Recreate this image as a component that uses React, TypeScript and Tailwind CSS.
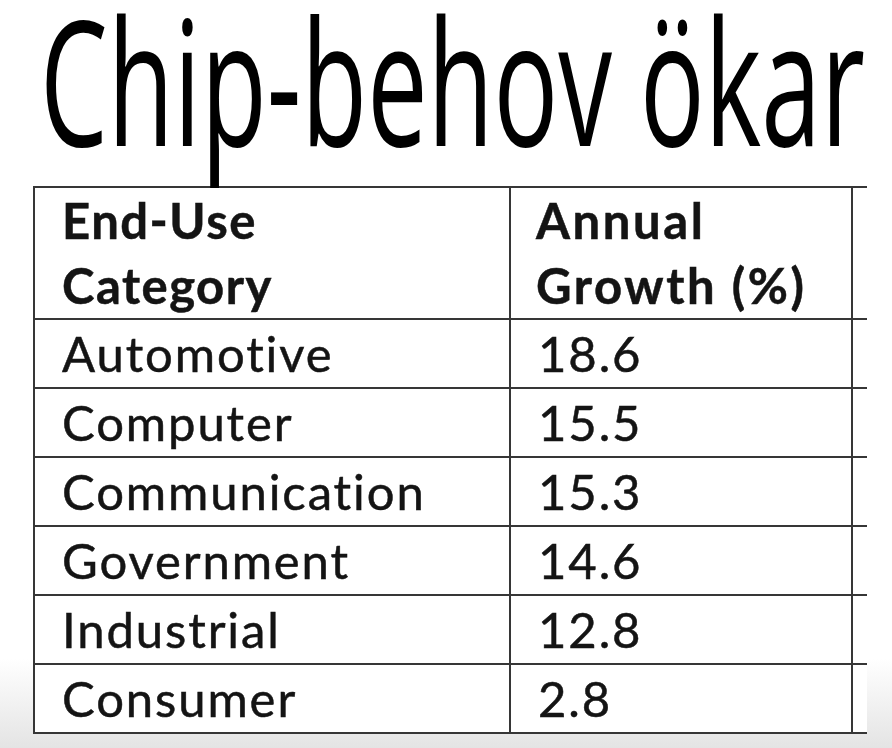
import React from "react";

const rows = [
  { cat: "Automotive", growth: "18.6" },
  { cat: "Computer", growth: "15.5" },
  { cat: "Communication", growth: "15.3" },
  { cat: "Government", growth: "14.6" },
  { cat: "Industrial", growth: "12.8" },
  { cat: "Consumer", growth: "2.8" },
];

export default function App() {
  return (
    <div className="w-[892px] h-[748px] overflow-hidden bg-[linear-gradient(to_bottom,#ffffff_88%,#e4e4e4)]">
      {/* Title */}
      <div className="h-[186px] pl-[40px] w-[892px]">
        <h1 className="inline-block whitespace-nowrap origin-top-left scale-y-[1.626] font-['Open_Sans',sans-serif] text-[107.6px] leading-[98.6px] font-normal text-black">
          Chip-behov ökar
        </h1>
      </div>

      {/* Table */}
      <div className="ml-[33px] w-[834px] overflow-hidden font-['Lato',sans-serif] text-[49px] text-[#141414] tracking-[1.9px] [font-variant-ligatures:none] [-webkit-text-stroke:0.5px_#141414]">
        <div className="flex h-[134px] border-y-2 border-[#363636] bg-white">
          <div className="w-[478px] shrink-0 border-x-2 border-[#363636] pl-[27px] flex flex-col justify-center font-bold leading-[65px] tracking-[1.5px]">
            <span>End-Use</span>
            <span>Category</span>
          </div>
          <div className="w-[342px] shrink-0 border-r-2 border-[#363636] pl-[25px] flex flex-col justify-center font-bold leading-[65px] tracking-[2.6px]">
            <span>Annual</span>
            <span>Growth (%)</span>
          </div>
          <div className="flex-1" />
        </div>
        {rows.map((r) => (
          <div key={r.cat} className="flex h-[69px] border-b-2 border-[#363636] bg-white">
            <div className="w-[478px] shrink-0 border-x-2 border-[#363636] pl-[27px] flex items-center">
              {r.cat}
            </div>
            <div className="w-[342px] shrink-0 border-r-2 border-[#363636] pl-[27px] flex items-center">
              {r.growth}
            </div>
            <div className="flex-1" />
          </div>
        ))}
      </div>
    </div>
  );
}
